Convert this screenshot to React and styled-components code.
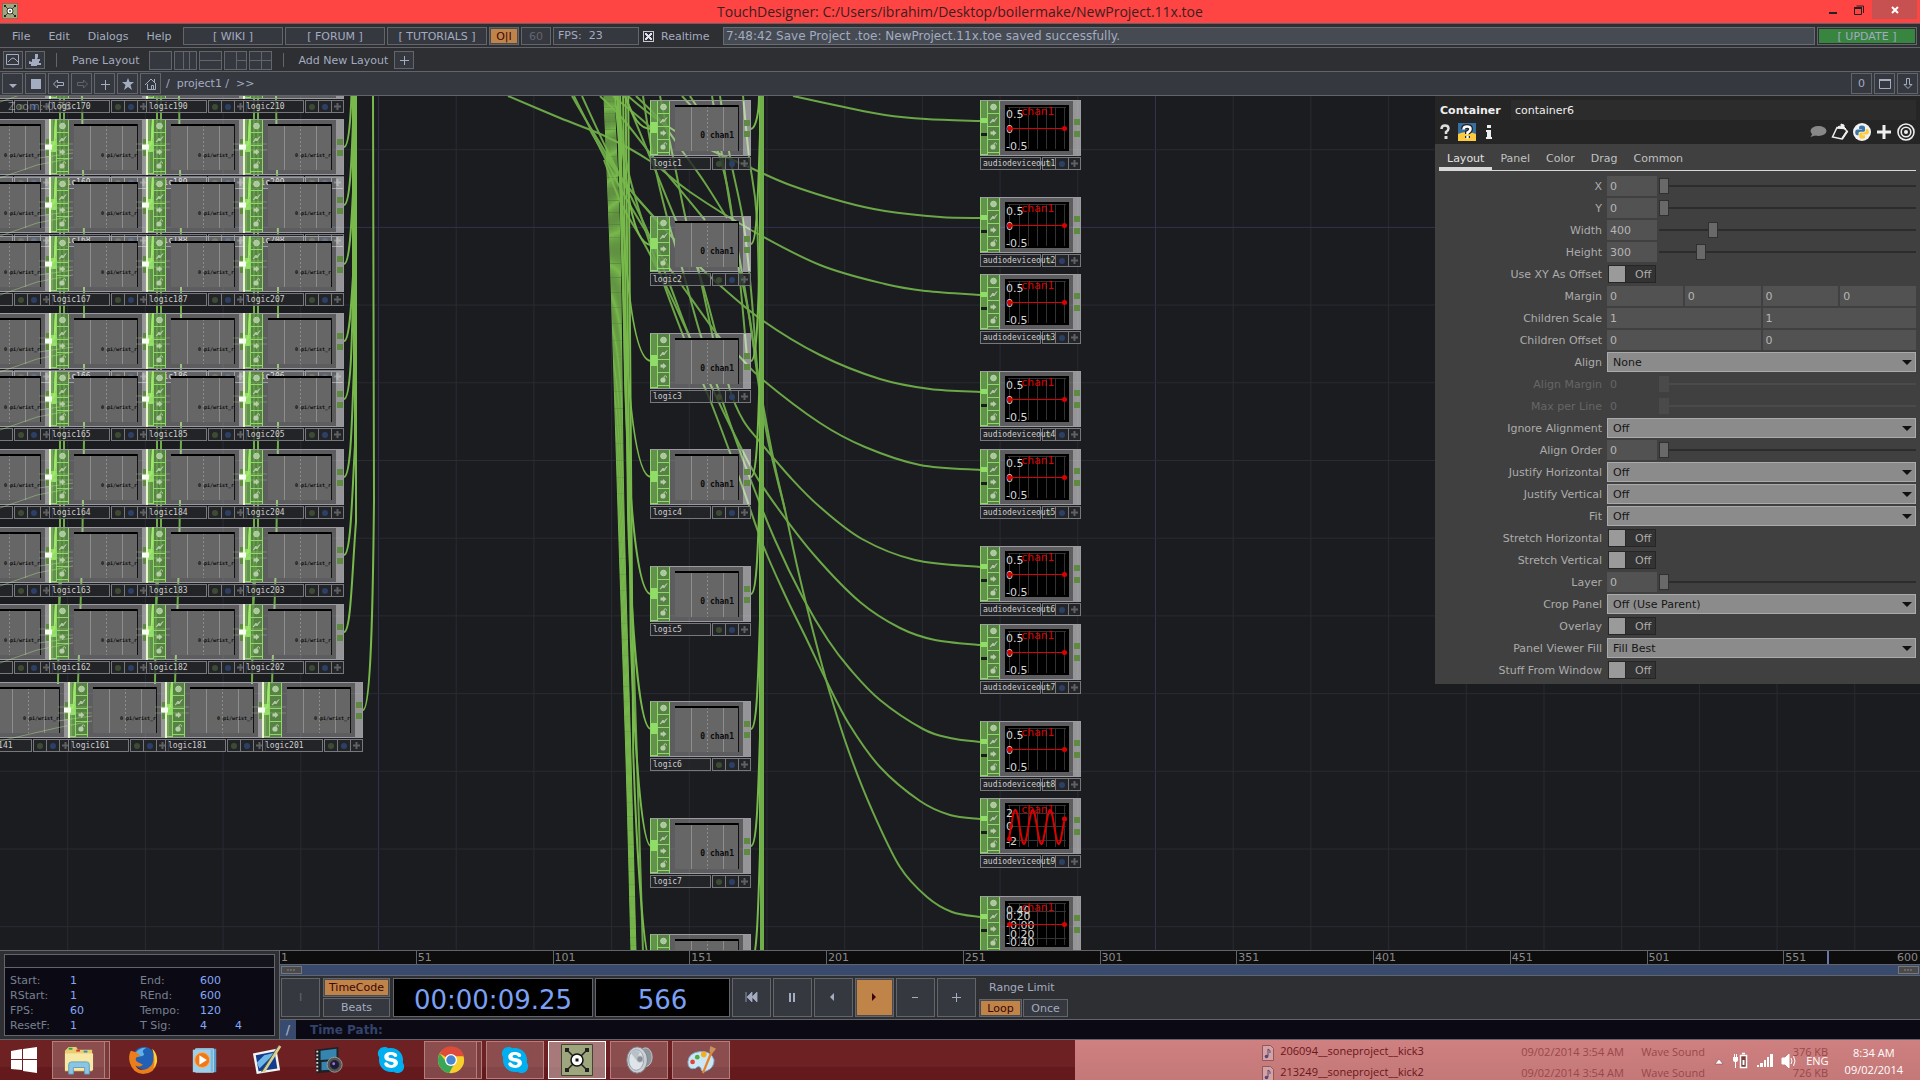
import React from 'react'
import styled, { createGlobalStyle, css } from 'styled-components'
import { FaSkype } from 'react-icons/fa'

const GlobalStyle = createGlobalStyle`
	* {
		box-sizing: border-box;
	}

	body {
		margin: 0;
		background: #1b1c20;
		font-family: 'DejaVu Sans', sans-serif;
		font-size: 11px;
		color: #a3acc0;
	}

	button, input, select {
		font: inherit;
		color: inherit;
		margin: 0;
		padding: 0;
		border-radius: 0;
		outline: none;
	}
`

const Page = styled.div`
	display: flex;
	flex-direction: column;
	height: 100vh;
	overflow: hidden;
`

/* ---------- title bar ---------- */

const TitleBar = styled.header`
	display: grid;
	grid-template-columns: 1fr auto 1fr;
	height: 23px;
	flex: none;
	background: #ff4444;
	color: #3a2020;
`

const AppIcon = styled.div`
	padding: 3px 2px;
`

const Title = styled.h1`
	margin: 0;
	font: 14px/23px 'Open Sans', sans-serif;
`

const WindowButtons = styled.div`
	display: flex;
	justify-content: flex-end;
	padding-right: 3px;
`

const WindowButton = styled.button`
	display: flex;
	align-items: center;
	justify-content: center;
	width: ${(props) => (props.$close ? '45px' : '26px')};
	height: 19px;
	border: none;
	background: ${(props) => (props.$close ? '#c75050' : 'none')};
`

/* ---------- toolbars ---------- */

const Bar = styled.div`
	display: flex;
	align-items: center;
	height: 24px;
	flex: none;
	padding: ${(props) => (props.$path ? '0 2px' : '1px 3px 0')};
	gap: 2px;
	background: ${(props) => (props.$path ? '#363840' : '#2e2f32')};
	border-top: 1px solid #626469;
	white-space: nowrap;
`

const MenuItems = styled.nav`
	display: flex;
	gap: 18px;
	width: 178px;
	padding-left: 9px;
`

const MenuItem = styled.button`
	border: none;
	background: none;
`

const BarButton = styled.button`
	display: flex;
	align-items: center;
	justify-content: center;
	flex: none;
	width: ${(props) => props.$w || 21}px;
	height: ${(props) => props.$h || 18}px;
	border: 1px solid #62656b;
	background: #363840;
	${(props) =>
		props.$hot &&
		css`
			background: #c08448;
			color: #3c0508;
			box-shadow: inset 0 0 0 1px #4a4a4e;
		`}
	${(props) =>
		props.$green &&
		css`
			background: #37853f;
			box-shadow: inset 0 0 0 1px #2e2f32;
		`}
	${(props) => props.$dim && 'color: #62656e;'}
`

const Readout = styled.div`
	width: 86px;
	height: 18px;
	padding-left: 4px;
	line-height: 16px;
	border: 1px solid #62656b;
	background: #363840;
`

const Status = styled.output`
	flex: 1;
	height: 18px;
	padding-left: 2px;
	font-size: 12px;
	line-height: 16px;
	border: 1px solid #686c74;
	background: #464a52;
`

const CheckLabel = styled.label`
	display: flex;
	align-items: center;
	gap: 7px;
	width: 80px;
	padding-left: 2px;
`

const CrossBox = styled.input`
	appearance: none;
	width: 11px;
	height: 11px;
	border: 1px solid #c4c8d0;
	background: #363840;

	&:checked {
		background:
			linear-gradient(45deg, transparent 42%, #dde 42% 58%, transparent 58%),
			linear-gradient(-45deg, transparent 42%, #dde 42% 58%, transparent 58%);
		background-origin: content-box;
		background-clip: content-box;
		padding: 1px;
	}
`

const Divider = styled.span`
	width: 1px;
	height: 14px;
	margin: 0 9px;
	background: #62656b;
`

const BarText = styled.span`
	padding: 0 ${(props) => props.$after}px 0 4px;
`

const PathText = styled.div`
	flex: 1;
	padding-left: 3px;
`

/* ---------- network canvas ---------- */

const Canvas = styled.main`
	position: relative;
	flex: 1;
	min-height: 0;
	overflow: hidden;
	border-top: 1px solid #626469;
	background: #1b1c20;
`

const Wires = styled.svg`
	position: absolute;
	inset: 0;
	width: 100%;
	height: 100%;
`

const ZoomText = styled.div`
	position: absolute;
	left: 8px;
	top: 4px;
	color: rgba(200, 200, 200, 0.5);
`

const NodeBox = styled.div`
	position: absolute;
	isolation: isolate;
	width: 101px;
`

const NodeBody = styled.div`
	display: flex;
	height: 56px;
	background: rgba(255, 255, 255, 0.29);
	border: 1px solid #9a9aa0;
	border-left-color: #8fd968;
`

const NodeInput = styled.div`
	display: flex;
	flex-direction: column;
	justify-content: ${(props) => (props.$two ? 'flex-start' : 'center')};
	width: 6px;
	background: rgba(100, 160, 70, 0.8);
	border-bottom: 1px solid #8fd968;
`

const Plug = styled.div`
	width: 6px;
	height: ${(props) => (props.$two ? 5 : 11)}px;
	margin-top: ${(props) => (props.$two ? 17 : 0)}px;
	background: #8fdc66;
`

const Gap = styled.div`
	height: 3px;
	margin-top: 10px;
	background: #1b1c20;
`

const Flags = styled.svg`
	width: 13px;
	height: 54px;
	flex: none;
`

const Viewer = styled.svg`
	width: 64px;
	height: 46px;
	margin: 4px 4px 0 5px;
	flex: none;
	font-family: 'DejaVu Sans Mono', monospace;
`

const NodeOutput = styled.div`
	flex: 1;
	display: flex;
	flex-direction: column;
	justify-content: center;
	align-items: center;
	gap: ${(props) => (props.$split ? 6 : 5)}px;
	background: rgba(255, 255, 255, 0.35);
`

const OutPin = styled.span`
	width: 6px;
	height: 6px;
	background: #5f8a42;
`

const NodeFooter = styled.div`
	position: relative;
	display: flex;
	gap: 1px;
	height: 13px;
	margin-top: 1px;
`

const NodeName = styled.div`
	width: 61px;
	padding-left: 2px;
	border: 1px solid #77787c;
	background: rgba(38, 39, 42, 0.8);
	color: #d0d0d0;
	font: 8px/12px 'DejaVu Sans Mono', monospace;
	white-space: nowrap;
	z-index: 1;
`

const NodeFlags = styled.div`
	display: grid;
	grid-template-columns: repeat(3, 1fr);
	flex: 1;
	border: 1px solid #77787c;
	background: rgba(38, 39, 42, 0.8);
`

const NodeFlag = styled.span`
	display: flex;
	align-items: center;
	justify-content: center;

	& + & {
		border-left: 1px solid #77787c;
	}
`

const LOGIC_TOPS = [100, 216, 333, 449, 566, 701, 818, 934]
const AUDIO_TOPS = [100, 197, 274, 371, 449, 546, 624, 721, 798, 896]
const GRID_ROWS = [43, 119, 177, 236, 313, 371, 449, 527, 604, 682]
const GRID_COLS = [-48, 49, 146, 243]
// the canvas starts below the toolbars
const ORIGIN_Y = 96

const gridNodes = GRID_ROWS.flatMap((y, row) =>
	GRID_COLS.map((x, col) => ({
		x: row === 9 ? x + 19 : x,
		y,
		name: `logic${141 + col * 20 + (9 - row)}`,
	}))
)

// smooth path through a list of [x, y] points
const spline = (pts) => {
	let d = `M${pts[0][0]} ${pts[0][1]}`
	for (let i = 0; i < pts.length - 1; i++) {
		const p0 = pts[i - 1] || pts[i]
		const p1 = pts[i]
		const p2 = pts[i + 1]
		const p3 = pts[i + 2] || p2
		d += `C${p1[0] + (p2[0] - p0[0]) / 6} ${p1[1] + (p2[1] - p0[1]) / 6} ${p2[0] - (p3[0] - p1[0]) / 6} ${p2[1] - (p3[1] - p1[1]) / 6} ${p2[0]} ${p2[1]}`
	}
	return d
}

const audioWires = [
	[[793, 96], [844, 107], [885, 115], [926, 119], [980, 121]],
	[[628, 96], [650, 114], [680, 134], [713, 151], [751, 168], [790, 185], [844, 202], [885, 211], [940, 217], [980, 218]],
	[[508, 96], [560, 118], [607, 137], [650, 161], [690, 192], [751, 230], [820, 265], [885, 284], [926, 291], [980, 295]],
	[[572, 96], [592, 130], [623, 180], [650, 213], [672, 237], [695, 262], [715, 281], [762, 320], [820, 355], [880, 379], [930, 389], [980, 392]],
	[[574, 96], [595, 138], [623, 193], [662, 257], [683, 287], [720, 338], [738, 355], [763, 380], [820, 423], [865, 447], [920, 465], [980, 470]],
	[[625, 96], [650, 157], [675, 218], [698, 270], [715, 330], [730, 390], [743, 420], [760, 442], [790, 477], [820, 507], [862, 539], [915, 560], [980, 567]],
	[[582, 96], [608, 152], [640, 215], [666, 275], [690, 338], [713, 390], [751, 467], [777, 507], [815, 556], [860, 602], [900, 628], [935, 640], [980, 645]],
	[[643, 96], [653, 157], [667, 217], [682, 268], [700, 333], [722, 400], [745, 465], [775, 540], [803, 598], [828, 640], [850, 669], [880, 700], [923, 729], [950, 738], [980, 742]],
	[[618, 96], [628, 170], [652, 250], [684, 338], [712, 405], [740, 480], [763, 545], [785, 595], [807, 640], [826, 680], [849, 724], [880, 767], [920, 801], [950, 815], [980, 819]],
	[[712, 96], [722, 155], [732, 217], [745, 290], [755, 355], [764, 410], [774, 462], [785, 510], [798, 570], [814, 635], [829, 690], [849, 752], [872, 810], [900, 867], [927, 897], [952, 912], [980, 917]],
]

const looseWires = [
	[[660, 96], [673, 157], [686, 220], [698, 268], [713, 338]],
	[[636, 96], [660, 120], [683, 152], [705, 183], [727, 218]],
	[[720, 96], [730, 157], [743, 220], [751, 290], [758, 380]],
	[[743, 96], [749, 157], [757, 220], [760, 360]],
	[[690, 96], [710, 130], [727, 185], [738, 262], [747, 357]],
	[[682, 96], [695, 110]],
	[[613, 96], [640, 118], [655, 132]],
	[[600, 96], [622, 118], [650, 153], [672, 180], [705, 220]],
	[[590, 130], [608, 160], [632, 192], [655, 218]],
	[[604, 160], [622, 205], [645, 245], [668, 290], [690, 338]],
	[[740, 272], [750, 320], [758, 380], [768, 440], [785, 510]],
]

const logicInputs = LOGIC_TOPS.map((top, i) => {
	const t = top + 28
	if (i === 0) return 'M625 96C633 118 640 129 651 129'
	if (i === 1) return 'M617 96C626 190 632 244 651 245'
	const x = 618 + (t - 361) * 0.022
	return `M${x - 3} 96L${x + 2} ${t - 210}C${x + 5} ${t - 120} ${x + 12} ${t} 651 ${t}`
})

const logicOutputs = LOGIC_TOPS.map((top) => {
	const t = top + 28
	return top === 100 ? 'M751 129C756 128 759 112 759 96' : `M751 ${t}C757 ${t} 758 ${t - 50} 760 ${t - 110}V96`
})

const bundle = Array.from({ length: 11 }, (_, i) =>
	spline([
		[604 + i, 96],
		[610 + i, 250],
		[618 + i * 0.6, 510],
		[626 + i * 0.5, 760],
		[631 + i * 0.5, 952],
	])
)

const gridOutputs = GRID_ROWS.slice(1).map((top, i) => {
	const t = top + 28
	return i === 8
		? `M363 ${t}C371 ${t} 373 ${t - 110} 374 ${t - 210}L373 96`
		: `M344 ${t}C351 ${t} 352 ${t - 60} ${353 + (i % 4)} ${t - 110}V96`
})

const Grid = () => (
	<g stroke="#2a2b33">
		{Array.from({ length: 24 }, (_, i) => (
			<line key={i} x1={67.7 + i * 77.7} x2={67.7 + i * 77.7} y1="96" y2="960" stroke={i % 10 === 4 ? '#323150' : undefined} />
		))}
		{Array.from({ length: 11 }, (_, i) => (
			<line key={i} y1={149.7 + i * 77.7} y2={149.7 + i * 77.7} x1="0" x2="1920" stroke={i % 10 === 1 ? '#323150' : undefined} />
		))}
	</g>
)

const Network = () => (
	<Wires aria-hidden="true">
		<g transform={`translate(0 ${-ORIGIN_Y})`} fill="none">
			<Grid />
			<g stroke="#6ba647" strokeWidth="2">
				{[...audioWires, ...looseWires].map((pts, i) => (
					<path key={i} d={spline(pts)} />
				))}
				<path d={spline([[618, 96], [622, 250], [629, 510], [637, 760], [643, 952]])} />
			</g>
			<g stroke="#78b94c" strokeWidth="2">
				{[...logicInputs, ...logicOutputs, ...gridOutputs].map((d, i) => (
					<path key={i} d={d} />
				))}
			</g>
			<g stroke="#78b94c">
				{bundle.map((d, i) => (
					<path key={i} d={d} />
				))}
			</g>
			<path d="M761 96V952M763 96V952" stroke="#6fae48" strokeWidth="2" />
			{GRID_COLS.slice(1).map((x) => (
				<g key={x} stroke="#6dae47" strokeWidth="2">
					<path d={`M${x + 11} 96V540L${x + 9} 684M${x + 15} 96V540L${x + 10} 610`} />
					<path d={`M${x + 33} 96L${x + 35} 240V440L${x + 33} 560L${x + 29} 684`} />
				</g>
			))}
		</g>
	</Wires>
)

// connections that glow over the edges of the logic grid
const GridLinks = () => (
	<Wires aria-hidden="true">
		<g transform={`translate(0 ${-ORIGIN_Y})`} fill="none">
			{gridNodes
				.filter((n) => n.x > 0)
				.map((n) => (
					<g key={n.name}>
						<path d={`M${n.x + 1} ${n.y}v56`} stroke="#e6f7cc" strokeWidth="2" />
						<path d={`M${n.x - 10} ${n.y + 25}h34M${n.x - 10} ${n.y + 31}h34`} stroke="#b8f090" strokeOpacity="0.3" />
						<path d={`M${n.x + 1} ${n.y + 28}q5 0 5-10t1-18`} stroke="#9eea68" strokeWidth="2" />
						<path d={`M${n.x - 4} ${n.y + 28}h7`} stroke="#f6fff0" strokeWidth="5" />
						{n.x < 80 && (
							<path d={`M0 ${n.y + 59}L${n.x - 12} ${n.y + 46}L${n.x + 24} ${n.y + 39}M${n.x - 10} ${n.y + 39}l34-5`} stroke="#b8f090" strokeOpacity="0.4" />
						)}
					</g>
				))}
		</g>
	</Wires>
)

const FlagIcons = () => (
	<Flags viewBox="0 0 13 54">
		<path fill="rgba(88,140,62,.8)" d="M0 0h13v54H0z" />
		<path fill="none" stroke="#8fd968" d="M.5 0v54M12.500 0v54M0 12.500h13M0 25.500h13M0 38.500h13M0 51.500h13" />
		<circle cx="6.500" cy="6" r="2.800" fill="#a9c99a" stroke="#b8d4aa" strokeWidth="1" />
		<path d="M3 22l3-4 1 1.500 3-3-3 4.500-1-1z" fill="#b4cfa6" stroke="#b4cfa6" strokeWidth=".8" />
		<path d="M6 29l3.500 3L6 35v-1.500H3.500v-3H6z" fill="#b4cfa6" />
		<circle cx="6" cy="46" r="2.600" fill="#b4cfa6" />
		<path d="M7 44.500v-2q1.500-1.500 2.500 0v1" fill="none" stroke="#b4cfa6" />
	</Flags>
)

const LogicViewer = ({ text, small }) => (
	<Viewer viewBox="0 0 64 46">
		<path d="M0 0h64v46H0z" fill="#666" />
		<path d="M16.500 1v45M48.500 1v45" stroke="#8d8d8d" />
		<path d="M32.500 1v45" stroke="#8d8d8d" strokeDasharray="2 2" />
		<path d="M0 1h64" stroke="#000" strokeWidth="2" />
		<path d="M63.500 0v46" stroke="#111" />
		<text x={small ? 63 : 59} y="33" textAnchor="end" fontSize={small ? 5 : 8} fontWeight="bold" fill="#0a0a0a">
			{text}
		</text>
	</Viewer>
)

const SINE = Array.from({ length: 56 }, (_, i) => [4 + i, 24 - 17 * Math.sin((i - 2) * 0.362)])

const AudioViewer = ({ kind }) => {
	const labels = {
		flat: [['0.5', 13], ['0', 28], ['-0.5', 45]],
		sine: [['2', 14], ['0', 27], ['-2', 42]],
		fine: [['0.40', 13], ['0.20', 19], ['-0.00', 28], ['-0.20', 37], ['-0.40', 45]],
	}[kind]
	return (
		<Viewer viewBox="0 0 64 46">
			<path d="M0 0h64v46H0z" fill="#000" />
			<path d="M4.500 2v42M14.500 2v42M23.500 2v42M32.500 2v42M41.500 2v42M50.500 2v42M59.500 2v42M3 2.500h58" stroke="#333" />
			{kind !== 'flat' && <path d="M3 10.500h58M3 23.500h58M3 37.500h58" stroke="#333" />}
			<g fill="#d6d6d6" fontSize="11" fontFamily="DejaVu Sans">
				{labels.map(([t, y]) => (
					<text key={t} x="1" y={y}>
						{t}
					</text>
				))}
			</g>
			<text x="16" y="10" fontSize="11" fill="#dd0000">
				chan1
			</text>
			{kind === 'sine' ? (
				<>
					<path d={spline(SINE)} fill="none" stroke="#dd0000" strokeWidth="2" />
					<circle cx="4.500" cy="36" r="2.500" fill="#dd0000" />
					<circle cx="59.500" cy="16" r="2.500" fill="#dd0000" />
				</>
			) : (
				<>
					<path d="M4 23.500h56" stroke="#dd0000" />
					<circle cx="4.500" cy="23.500" r="2.500" fill="#dd0000" />
					<circle cx="59.500" cy="23.500" r="2.500" fill="#dd0000" />
				</>
			)}
		</Viewer>
	)
}

const Node = ({ x, y, name, audio, children }) => (
	<NodeBox style={{ left: x, top: y - ORIGIN_Y }}>
		<NodeBody>
			<NodeInput $two={audio}>
				<Plug $two={audio} />
				{audio && <Gap />}
			</NodeInput>
			<FlagIcons />
			{children}
			<NodeOutput $split={audio}>
				<OutPin />
				<OutPin />
			</NodeOutput>
		</NodeBody>
		<NodeFooter>
			<NodeName>{name}</NodeName>
			<NodeFlags>
				<NodeFlag>
					<svg width="6" height="6">
						<circle cx="3" cy="3" r="3" fill="#3d4b33" />
					</svg>
				</NodeFlag>
				<NodeFlag>
					<svg width="6" height="6">
						<circle cx="3" cy="3" r="3" fill="#2c3f66" />
					</svg>
				</NodeFlag>
				<NodeFlag>
					<svg width="7" height="7">
						<path d="M3.500 0v7M0 3.500h7" stroke="#5e6062" strokeWidth="2" />
					</svg>
				</NodeFlag>
			</NodeFlags>
		</NodeFooter>
	</NodeBox>
)

/* ---------- parameter panel ---------- */

const Panel = styled.aside`
	position: absolute;
	top: 0;
	right: 0;
	width: 485px;
	padding-bottom: 2px;
	background: #404040;
	color: #a6a6a6;
`

const PanelHead = styled.div`
	padding: 4px 4px 0 5px;
	height: 48px;
	background: #252525;
	color: #eee;
`

const PanelTitle = styled.div`
	display: grid;
	grid-template-columns: 67px 1fr;
	gap: 4px;
	align-items: center;
	height: 20px;
`

const OpType = styled.label`
	padding-top: 1px;
	font-weight: bold;
`

const NameInput = styled.input`
	height: 20px;
	padding: 1px 0 0 4px;
	border: none;
	background: #2c2c2c;
`

const IconRow = styled.div`
	display: flex;
	align-items: center;
	gap: 4px;
	height: 24px;
	padding-right: 1px;
`

const IconButton = styled.button`
	display: flex;
	width: ${(props) => (props.$narrow ? 14 : 18)}px;
	height: 18px;
	border: none;
	background: none;
`

const Spacer = styled.span`
	flex: 1;
`

const Tabs = styled.div`
	display: flex;
	height: 27px;
	margin: 0 4px 5px 4px;
	border-bottom: 1px solid #d8d8d8;
`

const Tab = styled.button`
	padding: 6px 8px 0;
	border: none;
	border-bottom: 3px solid ${(props) => (props.$active ? '#d8d8d8' : 'transparent')};
	background: none;
	color: ${(props) => (props.$active ? '#e0e0e0' : '#c0c0c0')};
`

const ParamRow = styled.div`
	display: grid;
	grid-template-columns: 167px 1fr;
	gap: 5px;
	align-items: center;
	height: 20px;
	margin-bottom: 2px;
	padding-right: 4px;
	color: ${(props) => (props.$off ? '#666' : '#acacac')};
`

const ParamLabel = styled.label`
	padding-top: 1px;
	text-align: right;
`

const Fields = styled.div`
	display: flex;
	gap: 2px;
`

const Field = styled.input`
	flex: ${(props) => (props.$fixed ? 'none' : '1')};
	width: ${(props) => (props.$fixed ? '50px' : '0')};
	height: 20px;
	padding: 1px 0 0 3px;
	border: none;
	color: ${(props) => (props.disabled ? '#666' : '#b6b6b6')};
	background: ${(props) => (props.disabled ? '#404040' : '#525252')};
`

const Slider = styled.input`
	appearance: none;
	flex: 1;
	height: 20px;
	background: linear-gradient(#2c2c2c, #2c2c2c) center / 100% 2px no-repeat;

	&::-webkit-slider-thumb {
		appearance: none;
		width: 10px;
		height: 16px;
		border: 1px solid #303030;
		background: #696969;
	}

	&:disabled {
		background: linear-gradient(#4a4a4a, #4a4a4a) center / 100% 2px no-repeat;
	}

	&:disabled::-webkit-slider-thumb {
		border-color: #4a4a4a;
		background: #4a4a4a;
	}
`

const Toggle = styled.label`
	display: flex;
	align-items: center;
	width: 48px;
	height: 18px;
	margin-left: 1px;
	border: 1px solid #262626;
	background: #333;
`

const ToggleInput = styled.input`
	appearance: none;
	width: 17px;
	height: 16px;
	margin-right: 9px;
	border-right: 1px solid #262626;
	background: #9a9a9a;
`

const Drop = styled.div`
	position: relative;

	&::after {
		content: '';
		position: absolute;
		right: 4px;
		top: 8px;
		border: 5px solid transparent;
		border-top-color: #111;
		border-bottom: none;
		pointer-events: none;
	}
`

const Select = styled.select`
	appearance: none;
	display: block;
	width: 100%;
	height: 20px;
	padding: 1px 0 0 5px;
	border: 1px solid #aaa;
	background: #8b8b8b;
	color: #161616;
`

const PARAMS = [
	{ label: 'X', slider: 0, values: ['0'] },
	{ label: 'Y', slider: 0, values: ['0'] },
	{ label: 'Width', slider: 20, values: ['400'] },
	{ label: 'Height', slider: 15, values: ['300'] },
	{ label: 'Use XY As Offset', toggle: true },
	{ label: 'Margin', values: ['0', '0', '0', '0'] },
	{ label: 'Children Scale', values: ['1', '1'] },
	{ label: 'Children Offset', values: ['0', '0'] },
	{ label: 'Align', select: 'None' },
	{ label: 'Align Margin', slider: 0, values: ['0'], disabled: true },
	{ label: 'Max per Line', slider: 0, values: ['0'], disabled: true },
	{ label: 'Ignore Alignment', select: 'Off' },
	{ label: 'Align Order', slider: 0, values: ['0'] },
	{ label: 'Justify Horizontal', select: 'Off' },
	{ label: 'Justify Vertical', select: 'Off' },
	{ label: 'Fit', select: 'Off' },
	{ label: 'Stretch Horizontal', toggle: true },
	{ label: 'Stretch Vertical', toggle: true },
	{ label: 'Layer', slider: 0, values: ['0'] },
	{ label: 'Crop Panel', select: 'Off (Use Parent)' },
	{ label: 'Overlay', toggle: true },
	{ label: 'Panel Viewer Fill', select: 'Fill Best' },
	{ label: 'Stuff From Window', toggle: true },
]

const Param = ({ label, values, slider, toggle, select, disabled }) => {
	const id = label.toLowerCase().replace(/ /g, '-')
	return (
		<ParamRow $off={disabled}>
			<ParamLabel htmlFor={id}>{label}</ParamLabel>
			{values && (
				<Fields>
					{values.map((v, i) => (
						<Field
							key={i}
							id={i === 0 ? id : undefined}
							aria-label={`${label} ${i + 1}`}
							defaultValue={v}
							disabled={disabled}
							$fixed={slider !== undefined}
						/>
					))}
					{slider !== undefined && (
						<Slider type="range" aria-label={`${label} slider`} defaultValue={slider} disabled={disabled} />
					)}
				</Fields>
			)}
			{toggle && (
				<Toggle>
					<ToggleInput type="checkbox" id={id} />
					Off
				</Toggle>
			)}
			{select && (
				<Drop>
					<Select id={id} defaultValue={select}>
						<option>{select}</option>
					</Select>
				</Drop>
			)}
		</ParamRow>
	)
}

const PythonLogo = () => (
	<>
		<path d="M8.900 2.500c-2.500 0-2.800 1-2.800 2v1.500h3v.6H4.500c-1.500 0-2.300 1.200-2.300 2.800s.8 2.800 2 2.800h1.300v-1.600c0-1 .8-1.800 1.800-1.800h3.200c.9 0 1.500-.7 1.500-1.500V4.500c0-1.300-1.200-2-3.100-2z" fill="#3a75a8" />
		<path d="M9.300 15.700c2.500 0 2.800-1 2.800-2v-1.500h-3v-.6h4.600c1.500 0 2.200-1.200 2.200-2.800S15.200 6 14 6h-1.300v1.700c0 1-.8 1.700-1.800 1.700H7.700c-.9 0-1.500.7-1.500 1.500v2.800c0 1.300 1.200 2 3.100 2z" fill="#fccb3f" />
	</>
)

const ParameterPanel = () => (
	<Panel>
		<PanelHead>
			<PanelTitle>
				<OpType htmlFor="op-name">Container</OpType>
				<NameInput id="op-name" defaultValue="container6" />
			</PanelTitle>
			<IconRow>
				<IconButton $narrow aria-label="Help">
					<svg width="14" height="18">
						<path d="M1.500 6q0-3.500 3.500-3.500T8.500 5.500Q8.500 7.500 6 9v2" fill="none" stroke="#ddd" strokeWidth="2.500" />
						<path d="M4.500 13h3v3h-3z" fill="#ddd" />
					</svg>
				</IconButton>
				<IconButton aria-label="Python help">
					<svg width="18" height="18">
						<path d="M0 0h18v18H0z" fill="#3570a5" />
						<path d="M0 11q9-4 18 0v7H0z" fill="#fdcb3c" />
						<path d="M5.500 6q0-2.500 3.500-2.500t3.500 2.500q0 2-3 3.500v1.500M9.500 13v2" fill="none" stroke="#222" strokeWidth="5" />
						<path d="M5.500 6.500q0-3 3.500-3t3.500 2.500q0 2-3 3.500v2M9.500 13v2.500" fill="none" stroke="#fff" strokeWidth="2.500" />
					</svg>
				</IconButton>
				<IconButton aria-label="Info">
					<svg width="18" height="18">
						<path d="M7 2h4v3H7zM6 7h5v7h1v2H6v-2h1V9H6z" fill="#eee" />
					</svg>
				</IconButton>
				<Spacer />
				<IconButton aria-label="Comment">
					<svg width="18" height="18">
						<ellipse cx="9.500" cy="8" rx="8" ry="5" fill="#888" />
						<path d="M4 10l-2.500 4 6-2z" fill="#888" />
					</svg>
				</IconButton>
				<IconButton aria-label="Copy parameters">
					<svg width="18" height="18" fill="none" stroke="#eee">
						<path d="M6 4.500L1.500 14l9.500 2 5-8-3-3z" strokeWidth="1.500" />
						<path d="M6 5l2-2 2 1V1l3 1v2l2 2z" fill="#eee" />
						<path d="M16.500 8L11 16" strokeWidth="2" />
					</svg>
				</IconButton>
				<IconButton aria-label="Python">
					<svg width="18" height="18">
						<circle cx="9" cy="9" r="9" fill="#f2f2f2" />
						<PythonLogo />
					</svg>
				</IconButton>
				<IconButton aria-label="Add">
					<svg width="18" height="18">
						<path d="M9 2v14M2 9h14" stroke="#eee" strokeWidth="3" />
					</svg>
				</IconButton>
				<IconButton aria-label="Target">
					<svg width="18" height="18" fill="none" stroke="#eee">
						<circle cx="9" cy="9" r="8" strokeWidth="1.600" />
						<circle cx="9" cy="9" r="4.800" strokeWidth="1.600" />
						<circle cx="9" cy="9" r="2" fill="#eee" stroke="none" />
					</svg>
				</IconButton>
			</IconRow>
		</PanelHead>
		<Tabs>
			{['Layout', 'Panel', 'Color', 'Drag', 'Common'].map((t, i) => (
				<Tab key={t} $active={i === 0}>
					{t}
				</Tab>
			))}
		</Tabs>
		{PARAMS.map((p) => (
			<Param key={p.label} {...p} />
		))}
	</Panel>
)

/* ---------- timeline ---------- */

const Timeline = styled.section`
	display: grid;
	grid-template-columns: 279px 1fr;
	height: 90px;
	flex: none;
	border-top: 1px solid #626469;
	border-bottom: 1px solid #626469;
	background: #2e2f32;
`

const RangePanel = styled.div`
	margin: 3px 4px;
	border: 1px solid #62656b;
	background: #0b0a14;
`

const RangeHead = styled.div`
	height: 13px;
	background: #14151c;
	border-bottom: 1px solid #62656b;
`

const RangeGrid = styled.div`
	display: grid;
	grid-template-columns: 60px 70px 60px 35px 30px;
	grid-auto-rows: 15px;
	align-items: center;
	padding: 5px 0 0 5px;
	color: #788090;
`

const RangeValue = styled.span`
	color: #84a8f8;
`

const TimeSide = styled.div`
	display: flex;
	flex-direction: column;
	border-left: 1px solid #626469;
`

const Ruler = styled.div`
	position: relative;
	display: flex;
	height: 14px;
	background: #0d0d0d;
	border-bottom: 1px solid #626469;
	color: #8a8a8a;
	line-height: 13px;
`

const Tick = styled.div`
	display: flex;
	justify-content: space-between;
	flex: 1;
	padding: 0 2px 0 1px;

	& + & {
		border-left: 1px solid #626469;
	}
`

const Playhead = styled.div`
	position: absolute;
	top: 0;
	width: 2px;
	height: 13px;
	background: #6878a8;
`

const ScrollTrack = styled.div`
	display: flex;
	justify-content: space-between;
	height: 11px;
	padding: 1px;
	background: #384a6e;
	border-bottom: 1px solid #626469;
`

const Grip = styled.button`
	display: flex;
	align-items: center;
	justify-content: center;
	width: 21px;
	height: 8px;
	border: 1px solid #777;
	background: #4a4a4a;
`

const Transport = styled.div`
	display: flex;
	gap: 2px;
	height: 44px;
	padding: 2px 1px;
	border-bottom: 1px solid #626469;
`

const Column = styled.div`
	display: flex;
	flex-direction: column;
	gap: 1px;
	padding: 0 1px;
`

const Counter = styled.output`
	width: ${(props) => props.$w}px;
	height: 39px;
	border: 1px solid #62656b;
	background: #000;
	color: #7ba0f5;
	font-size: 26px;
	line-height: 42px;
	text-align: center;
`

const RangeLimit = styled.div`
	padding: 3px 0 0 1px;
`

const LimitTitle = styled.div`
	padding-left: 10px;
	height: 18px;
`

const LimitButtons = styled.div`
	display: flex;
	gap: 1px;
`

const TimePath = styled.div`
	display: flex;
	align-items: center;
	flex: 1;
	gap: 14px;
	background: #0b0a14;
	color: #33436b;
	font-weight: bold;
	font-size: 12px;
`

const Slash = styled.button`
	width: 16px;
	height: 100%;
	border: none;
	background: #384a6e;
	color: #a3acc0;
`

const RANGE = [
	['Start:', '1', 'End:', '600', ''],
	['RStart:', '1', 'REnd:', '600', ''],
	['FPS:', '60', 'Tempo:', '120', ''],
	['ResetF:', '1', 'T Sig:', '4', '4'],
]

const TRANSPORT = [
	['Rewind', <path key="p" d="M1 1v10M12 1v10L7 6zM7 1v10L2 6z" stroke="currentColor" fill="currentColor" strokeWidth=".8" />],
	['Pause', <path key="p" d="M4 2v9M8 2v9" stroke="currentColor" strokeWidth="2" />],
	['Back', <path key="p" d="M7 2v8L3 6z" fill="currentColor" />],
	['Play', <path key="p" d="M4 2v8l4-4z" fill="currentColor" />],
	['Step back', <path key="p" d="M3 6.500h6" stroke="currentColor" />],
	['Step forward', <path key="p" d="M2 6.500h9M6.500 2v9" stroke="currentColor" />],
]

const GripDots = () => (
	<svg width="9" height="2">
		<path d="M1 0v2M4 0v2M7 0v2" stroke="#888" />
	</svg>
)

const TimelineBar = () => (
	<Timeline>
		<RangePanel>
			<RangeHead />
			<RangeGrid>
				{RANGE.flatMap((row, r) =>
					row.map((cell, c) =>
						c === 0 || c === 2 ? <span key={`${r}${c}`}>{cell}</span> : <RangeValue key={`${r}${c}`}>{cell}</RangeValue>
					)
				)}
			</RangeGrid>
		</RangePanel>
		<TimeSide>
			<Ruler>
				{Array.from({ length: 12 }, (_, i) => (
					<Tick key={i}>
						<span>{i * 50 + 1}</span>
						{i === 11 && <span>600</span>}
					</Tick>
				))}
				<Playhead style={{ left: `${(565 / 599) * 100}%` }} />
			</Ruler>
			<ScrollTrack>
				<Grip aria-label="Range start">
					<GripDots />
				</Grip>
				<Grip aria-label="Range end">
					<GripDots />
				</Grip>
			</ScrollTrack>
			<Transport>
				<BarButton $w={39} $h={39} $dim>
					I
				</BarButton>
				<Column>
					<BarButton $w={67} $h={19} $hot>
						TimeCode
					</BarButton>
					<BarButton $w={67} $h={19}>
						Beats
					</BarButton>
				</Column>
				<Counter $w={200}>00:00:09.25</Counter>
				<Counter $w={135}>566</Counter>
				{TRANSPORT.map(([label, icon]) => (
					<BarButton key={label} $w={39} $h={39} $hot={label === 'Play'} aria-label={label}>
						<svg width="13" height="13">{icon}</svg>
					</BarButton>
				))}
				<RangeLimit>
					<LimitTitle>Range Limit</LimitTitle>
					<LimitButtons>
						<BarButton $w={43} $hot>
							Loop
						</BarButton>
						<BarButton $w={45}>Once</BarButton>
					</LimitButtons>
				</RangeLimit>
			</Transport>
			<TimePath>
				<Slash>/</Slash>
				Time Path:
			</TimePath>
		</TimeSide>
	</Timeline>
)

/* ---------- taskbar ---------- */

const Taskbar = styled.footer`
	display: flex;
	height: 40px;
	flex: none;
	background: linear-gradient(#6e2122 68%, #641a1c 68%);
	font-family: 'Open Sans', sans-serif;
`

const TaskButtons = styled.div`
	display: flex;
	flex: 1;
	gap: 4px;
	padding-top: 1px;
`

const TaskButton = styled.button`
	display: flex;
	align-items: center;
	justify-content: center;
	width: ${(props) => (props.$start ? 48 : 58)}px;
	height: 38px;
	border: 1px solid transparent;
	background: none;
	${(props) =>
		props.$open &&
		css`
			border-color: #b08080;
			background: rgba(255, 255, 255, 0.2);
		`}
	${(props) =>
		props.$focus &&
		css`
			border-color: #fff;
			background: rgba(255, 255, 255, 0.4);
		`}
	${(props) =>
		props.$stack &&
		css`
			padding-right: 5px;
			box-shadow: inset -4px 0 0 #7d3a3b, inset -5px 0 0 #b08080;
		`}
`

const TrayArea = styled.div`
	position: relative;
	width: 44%;
	background: linear-gradient(#cf8080, #c47878);
	overflow: hidden;
`

const FileTable = styled.table`
	width: 566px;
	margin-left: 187px;
	border-collapse: collapse;
	table-layout: fixed;
	font-size: 11px;
	color: #98474b;
	white-space: nowrap;

	td {
		height: 21px;
		padding: 2px 0 0;
		line-height: 18px;
	}
`

const FileName = styled.td`
	width: 259px;
	color: #6a1518;

	svg {
		vertical-align: middle;
		margin-right: 6px;
	}
`

const FileCell = styled.td`
	width: ${(props) => props.$w}px;
	text-align: ${(props) => (props.$right ? 'right' : 'left')};
`

const Tray = styled.div`
	position: absolute;
	top: 0;
	right: 17px;
	display: flex;
	align-items: center;
	gap: 8px;
	height: 40px;
	padding-top: 1px;
	color: #fff;
	font-size: 11px;
`

const Clock = styled.time`
	margin-left: 8px;
	line-height: 17px;
	text-align: center;
`

const TdLogo = ({ size }) => (
	<svg width={size} height={size} viewBox="0 0 32 32">
		<path d="M.5.5h31v31H.5z" fill="#9ea67e" stroke="#43462f" />
		<path d="M5 5l22 22M27 5L5 27" stroke="#222" strokeWidth="1.500" />
		<path d="M4 4h4v4H4zM24 4h4v4h-4zM4 24h4v4H4zM24 24h4v4h-4z" fill="#222" />
		<circle cx="16" cy="16" r="6" fill="#fff" stroke="#111" strokeWidth="1.500" />
		<path d="M14.500 14.500h3v3h-3z" fill="#111" />
	</svg>
)

const Skype = () => (
	<svg width="30" height="30" viewBox="0 0 32 32">
		<circle cx="16" cy="16" r="10" fill="#fff" />
		<FaSkype size="32" color="#00aff0" />
	</svg>
)

const TASKS = [
	{
		name: 'File Explorer',
		open: true,
		stack: true,
		icon: (
			<>
				<path d="M1 6l4-4h8l2 3h15v23H1z" fill="#e8cf72" />
				<path d="M1 9h30v18H1z" fill="#f7e9a5" />
				<path d="M5 3h4v2H5z" fill="#2aa745" />
				<path d="M13 5h4v2h-4z" fill="#d33" />
				<path d="M21 6h4v2h-4z" fill="#38c" />
				<path d="M5 31V21q0-3 3-3h16q3 0 3 3v10h-5v-7H10v7z" fill="#8cc4e2" stroke="#5c9fc4" />
			</>
		),
	},
	{
		name: 'Firefox',
		icon: (
			<>
				<circle cx="17" cy="14" r="12" fill="#2161b5" />
				<path d="M8 8q5-6 12-5-5 2-4 5 3 3-2 4-6 1-6-4z" fill="#5fb1e8" />
				<path d="M3 6q-3 6-1 13 3 11 14 12 13-1 15-13 1-8-5-14 2 5 1 8 1 9-6 13-9 4-13-3 5 2 8-1-3-2-6-3-3-2-1-5 3 0 4-2l-4-3-3-1z" fill="#ea7d1c" />
				<path d="M26 4q5 5 5 13-1 5-4 8 3-9-1-21z" fill="#fbd23c" />
			</>
		),
	},
	{
		name: 'Media Player',
		icon: (
			<>
				<path d="M9 4h19v25H9z" fill="#5a9fcc" />
				<path d="M6 4h19v25H6z" fill="#78b8de" stroke="#a9d6ee" />
				<path d="M3 5h19v24H3z" fill="#9fd0ea" />
				<circle cx="13" cy="16" r="8" fill="#f07a18" stroke="#f9b26a" />
				<path d="M10 11l8 5-8 5z" fill="#fff" />
			</>
		),
	},
	{
		name: 'Photo Editor',
		icon: (
			<>
				<path d="M1 9l25-5 4 23-25 4z" fill="#f4f4f0" />
				<path d="M4 11l20-4 3 18-20 3z" fill="#143c8c" />
				<path d="M5 19l8-8 12-3-17 17z" fill="#6fb7e8" />
				<path d="M30 1L12 29" stroke="#d8d090" strokeWidth="3" />
				<path d="M28 1L10 29" stroke="#50604a" />
			</>
		),
	},
	{
		name: 'Movie Maker',
		icon: (
			<>
				<path d="M1 5l25-3v26L3 30z" fill="#1d2226" />
				<path d="M7 6l17-2v11L7 16zM8 18l15-1v9L8 27z" fill="#3685b0" />
				<path d="M3.500 6v24" stroke="#ddd" strokeWidth="2" strokeDasharray="2 2" />
				<circle cx="22" cy="21" r="8" fill="#555" stroke="#999" />
				<circle cx="22" cy="21" r="4.500" fill="#1d1a40" stroke="#222" />
				<circle cx="21" cy="20" r="1.500" fill="#9a7cd0" />
			</>
		),
	},
	{ name: 'Skype', skype: true },
	{
		name: 'Chrome',
		open: true,
		stack: true,
		icon: (
			<>
				<circle cx="16" cy="16" r="14" fill="#f7cf2c" />
				<path d="M16 16L4 9A14 14 0 0 1 30 12H16z" fill="#dd4b39" />
				<path d="M4 9A14 14 0 0 0 14 30l6-11-9-1z" fill="#3aa757" />
				<circle cx="16" cy="16" r="6.500" fill="#fff" />
				<circle cx="16" cy="16" r="5" fill="#4a86cf" />
			</>
		),
	},
	{ name: 'Skype chat', open: true, skype: true },
	{ name: 'TouchDesigner', open: true, focus: true, td: true },
	{
		name: 'Sound',
		open: true,
		icon: (
			<>
				<ellipse cx="23" cy="13" rx="7" ry="10" fill="#8d969c" stroke="#c3c9ce" />
				<ellipse cx="14" cy="16" rx="11" ry="14" fill="#c9cfd4" stroke="#7b8288" />
				<ellipse cx="13" cy="16" rx="8" ry="11" fill="#dfe4ea" stroke="#989fa6" />
				<path d="M13 16L7 8q5-5 10 0z" fill="#b9c0c8" />
				<circle cx="17" cy="15" r="3.500" fill="#8a9098" stroke="#c0c6cc" />
			</>
		),
	},
	{
		name: 'Paint',
		open: true,
		icon: (
			<>
				<path d="M2 18Q3 8 15 7t15 9q0 9-9 12-5 1-5-3-2-4-6 0-8 2-8-7z" fill="#cbe6f5" stroke="#7ba9c5" />
				<circle cx="7" cy="18" r="2.500" fill="#e04434" />
				<circle cx="12" cy="13" r="2.500" fill="#4fae3a" />
				<circle cx="19" cy="10" r="3" fill="#f2b01e" />
				<path d="M27 8L18 30" stroke="#e8832a" strokeWidth="2.500" />
				<path d="M25 7l1-6 6 3-4 5z" fill="#c7955a" />
			</>
		),
	},
]

const FILES = [
	['206094__soneproject__kick3', '09/02/2014 3:54 AM', 'Wave Sound', '376 KB'],
	['213249__soneproject__kick2', '09/02/2014 3:54 AM', 'Wave Sound', '726 KB'],
]

const DesktopTaskbar = () => (
	<Taskbar>
		<TaskButtons>
			<TaskButton $start aria-label="Start">
				<svg width="26" height="26">
					<path d="M0 4l11-2v10H0zM12 2l14-2v12H12zM0 13h11v10L0 22zM12 13h14v13l-14-2z" fill="#fff" />
				</svg>
			</TaskButton>
			{TASKS.map((t) => (
				<TaskButton key={t.name} $open={t.open} $focus={t.focus} $stack={t.stack} aria-label={t.name}>
					{t.skype && <Skype />}
					{t.td && <TdLogo size={32} />}
					{t.icon && (
						<svg width="30" height="30" viewBox="0 0 32 32">
							{t.icon}
						</svg>
					)}
				</TaskButton>
			))}
		</TaskButtons>
		<TrayArea>
			<FileTable>
				<tbody>
					{FILES.map(([name, date, type, size]) => (
						<tr key={name}>
							<FileName>
								<svg width="12" height="16">
									<path d="M.5.5h8l3 3v12H.5z" fill="#d9a0a0" stroke="#8a5a60" />
									<path d="M6 4v7M6 4q3 1 2 4" stroke="#4a4a80" fill="none" />
									<circle cx="4.500" cy="11.500" r="1.800" fill="#4a4a80" />
								</svg>
								{name}
							</FileName>
							<FileCell $w={120}>{date}</FileCell>
							<FileCell $w={110}>{type}</FileCell>
							<FileCell $w={77} $right>
								{size}
							</FileCell>
						</tr>
					))}
				</tbody>
			</FileTable>
			<Tray>
				<svg width="10" height="8">
					<path d="M1 7l4-5 4 5z" fill="#fff" stroke="#7a4040" strokeWidth=".5" />
				</svg>
				<svg width="17" height="17">
					<path d="M8.500 3.500h6v12h-6zM10 1.500h3" fill="#7a4040" stroke="#fff" strokeWidth="1.500" />
					<path d="M10.500 8h2v5h-2z" fill="#fff" />
					<path d="M1 5h5v3q0 2-2 2v6H3v-6Q1 10 1 8zM2 2h1v3H2zM4 2h1v3H4z" fill="#fff" />
				</svg>
				<svg width="16" height="14">
					<path d="M0 11h2v2H0zM3 9h3v4H3zM7 6h2v7H7zM10 3h2v10h-2zM13 0h3v13h-3z" fill="#fff" />
				</svg>
				<svg width="17" height="16" fill="none" stroke="#fff">
					<path d="M1 5h3l4-4v14l-4-4H1z" fill="#fff" />
					<path d="M10 5q2 3 0 6M12.500 3q3 5 0 10" />
				</svg>
				<span>ENG</span>
				<Clock>
					8:34 AM
					<br />
					09/02/2014
				</Clock>
			</Tray>
		</TrayArea>
	</Taskbar>
)

const PANE_LAYOUTS = ['', 'M8.500 0v17M14.500 0v17', 'M0 8.500h23', 'M11.500 0v17M11.500 8.500h12', 'M11.500 0v17M0 8.500h23']

const PATH_BUTTONS = [
	['Pane type', <path key="p" d="M3 7h8l-4 4z" fill="#a3acc0" />],
	['Stop', <path key="p" d="M2 2h10v10H2z" fill="#a3acc0" />],
	['Back', <path key="p" d="M1.500 7l4-4v2.500h6v3h-6V11z" stroke="#a3acc0" fill="none" />],
	['Forward', <path key="p" d="M12.500 7l-4-4v2.500h-6v3h6V11z" stroke="#5f646e" fill="none" />],
	['Add', <path key="p" d="M7.500 3v10M3 7.500h9" stroke="#a3acc0" />],
	['Bookmark', <path key="p" d="M7 1l1.600 4H13L9.500 8l1.500 5-4-3-4 3 1.500-5L1 5h4.400z" fill="#a3acc0" />],
	['Home', <path key="p" d="M1 8l6-6 5 5M3.500 7v5.500h8V6M7.500 12V8.500h2V12M10.500 2v3" stroke="#a3acc0" fill="none" />],
]

const App = () => {
	return (
		<Page>
			<GlobalStyle />
			<TitleBar>
				<AppIcon>
					<TdLogo size={16} />
				</AppIcon>
				<Title>TouchDesigner: C:/Users/ibrahim/Desktop/boilermake/NewProject.11x.toe</Title>
				<WindowButtons>
					<WindowButton aria-label="Minimize">
						<svg width="10" height="10">
							<path d="M1 8h8" stroke="#222" strokeWidth="2" />
						</svg>
					</WindowButton>
					<WindowButton aria-label="Restore">
						<svg width="10" height="10" fill="none" stroke="#222">
							<path d="M.5 3h7v6.500h-7zM2.500 1h7v7" />
							<path d="M0 3h8" strokeWidth="2" />
						</svg>
					</WindowButton>
					<WindowButton $close aria-label="Close">
						<svg width="8" height="8">
							<path d="M1 1l6 6M7 1L1 7" stroke="#fff" strokeWidth="2" />
						</svg>
					</WindowButton>
				</WindowButtons>
			</TitleBar>

			<Bar>
				<MenuItems>
					{['File', 'Edit', 'Dialogs', 'Help'].map((m) => (
						<MenuItem key={m}>{m}</MenuItem>
					))}
				</MenuItems>
				<BarButton $w={100}>[ WIKI ]</BarButton>
				<BarButton $w={100}>[ FORUM ]</BarButton>
				<BarButton $w={100}>[ TUTORIALS ]</BarButton>
				<BarButton $w={30} $hot>
					O|I
				</BarButton>
				<BarButton $w={30} $dim>
					60
				</BarButton>
				<Readout>FPS:&nbsp; 23</Readout>
				<CheckLabel>
					<CrossBox type="checkbox" defaultChecked />
					Realtime
				</CheckLabel>
				<Status>7:48:42 Save Project .toe: NewProject.11x.toe saved successfully.</Status>
				<BarButton $w={100} $green>
					[ UPDATE ]
				</BarButton>
			</Bar>

			<Bar>
				<BarButton $w={20} aria-label="Network view">
					<svg width="14" height="12" fill="none" stroke="#a3acc0">
						<path d="M.5.5h12v10H.5zM2 8l3-3 2-1 2 1 3 3" />
					</svg>
				</BarButton>
				<BarButton $w={20} aria-label="Palette">
					<svg width="14" height="14" fill="#a3acc0">
						<path d="M7 1h3v3L9 6h3v2h-1v2h2v2H9v1H3v-2H1V8l3 1V6h3z" />
					</svg>
				</BarButton>
				<Divider />
				<BarText $after={7}>Pane Layout</BarText>
				{PANE_LAYOUTS.map((d, i) => (
					<BarButton key={i} $w={23} $h={19} aria-label={`Layout ${i + 1}`}>
						<svg width="21" height="17">
							<path d={d} stroke="#62656b" />
						</svg>
					</BarButton>
				))}
				<Divider />
				<BarText $after={4}>Add New Layout</BarText>
				<BarButton $w={20} aria-label="Add layout">
					<svg width="13" height="13">
						<path d="M6.500 2v9M2 6.500h9" stroke="#a3acc0" />
					</svg>
				</BarButton>
			</Bar>

			<Bar $path>
				{PATH_BUTTONS.map(([label, icon]) => (
					<BarButton key={label} $h={21} aria-label={label}>
						<svg width="14" height="14">{icon}</svg>
					</BarButton>
				))}
				<PathText>/&nbsp; project1 /&nbsp; &gt;&gt;</PathText>
				<BarButton $h={21}>0</BarButton>
				<BarButton $h={21} aria-label="Maximize pane">
					<svg width="12" height="12" fill="none" stroke="#a3acc0">
						<path d="M.5 1.500h11v9H.5z" />
						<path d="M0 2h12" strokeWidth="2" />
					</svg>
				</BarButton>
				<BarButton $h={21} aria-label="Send down">
					<svg width="12" height="14" fill="none" stroke="#a3acc0">
						<path d="M4.500 1.500h3v6H10l-4 4-4-4h2.500z" />
					</svg>
				</BarButton>
			</Bar>

			<Canvas>
				<Network />
				{gridNodes.map((n) => (
					<Node key={n.name} {...n}>
						<LogicViewer text="0 pi/wrist_r" small />
					</Node>
				))}
				<GridLinks />
				{LOGIC_TOPS.map((y, i) => (
					<Node key={y} x={650} y={y} name={`logic${i + 1}`}>
						<LogicViewer text="0 chan1" />
					</Node>
				))}
				{AUDIO_TOPS.map((y, i) => (
					<Node key={y} x={980} y={y} name={`audiodeviceout${i + 1}`} audio>
						<AudioViewer kind={i === 8 ? 'sine' : i === 9 ? 'fine' : 'flat'} />
					</Node>
				))}
				<ZoomText>Zoom: 0.78</ZoomText>
				<ParameterPanel />
			</Canvas>

			<TimelineBar />
			<DesktopTaskbar />
		</Page>
	)
}

export default App
